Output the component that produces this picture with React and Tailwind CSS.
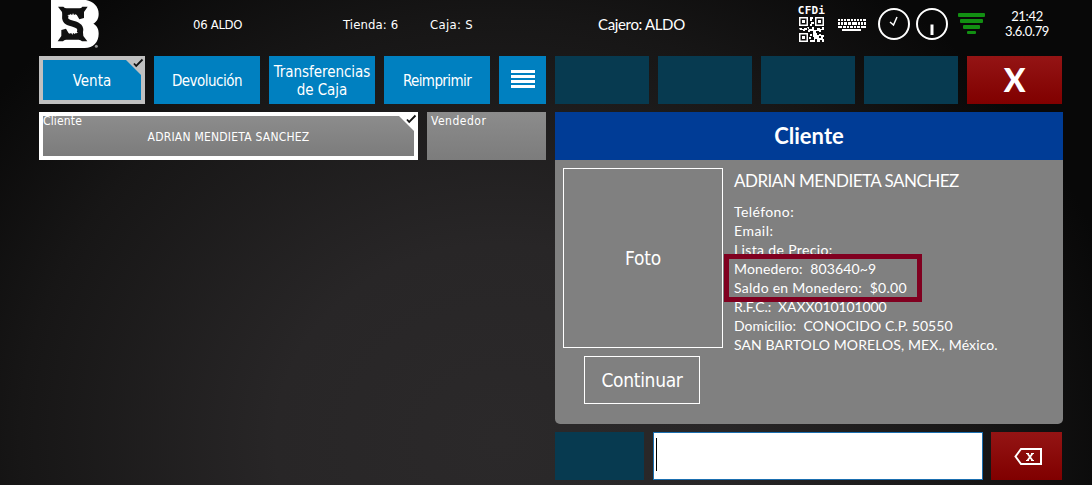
import React from 'react';

const topActions = [
  { label: 'Venta', tracking: 'tracking-[0px]' },
  { label: 'Devolución', tracking: 'tracking-[-0.5px]' },
  { label: 'Transferencias de Caja', tracking: 'tracking-[-0.05px]' },
  { label: 'Reimprimir', tracking: 'tracking-[-0.6px]' },
];

const customerLines = [
  { text: 'Teléfono:', tracking: 'tracking-[0.4px]' },
  { text: 'Email:', tracking: 'tracking-[0.5px]' },
  { text: 'Lista de Precio:', tracking: 'tracking-[0.35px]' },
  { text: 'Monedero:  803640~9', tracking: 'tracking-[0.15px]' },
  { text: 'Saldo en Monedero:  $0.00', tracking: 'tracking-[0.26px]' },
  { text: 'R.F.C.:  XAXX010101000', tracking: 'tracking-[-0.1px]' },
  { text: 'Domicilio:  CONOCIDO C.P. 50550', tracking: 'tracking-[0.06px]' },
  { text: 'SAN BARTOLO MORELOS, MEX., México.', tracking: 'tracking-[0.1px]' },
];

const LogoHorns = ({ transform }) => (
  <g transform={transform}>
    <path d="M54 20H70Q74 25 80 25H118Q124 25 127 20H143L132 36V54L118 58L110 44L86 44L68 58L66 36Z" fill="#111" />
    <path d="M87 52L92 41L96 48L99 39L103 48L107 42L111 54Z" fill="#fff" />
  </g>
);

const Logo = () => (
  <svg viewBox="33 0 150 150" className="w-[50px] h-[50px]">
    <path
      d="M33 0H138C160 4 176 20 176 41C176 56 170 65 160 71C171 77 176 86 176 101C176 126 160 144 134 144H33Z"
      fill="#fff"
    />
    <LogoHorns />
    <LogoHorns transform="rotate(180 98 72)" />
    <path d="M77 45C72 62 80 66 98 71C116 76 125 82 119 99" fill="none" stroke="#111" strokeWidth="18" />
    <circle cx="169" cy="139" r="4.5" fill="#999" />
  </svg>
);

const QrCode = () => (
  <svg viewBox="0 0 25 25" className="w-[25px] h-[25px]" fill="#fff">
    {/* finder squares */}
    {[[0, 0], [16, 0], [0, 16]].map(([x, y]) => (
      <g key={`${x}-${y}`}>
        <rect x={x + 0.75} y={y + 0.75} width="7.5" height="7.5" fill="none" stroke="#fff" strokeWidth="1.5" />
        <rect x={x + 3} y={y + 3} width="3" height="3" />
      </g>
    ))}
    <path d="M11 0h3v2h-1v2h-2zM12 5h3v2h-2v2h-2v-2h1zM0 11h3v1h2v-1h3v2h-2v1h-2v-1h-3zM8 10h2v2h3v-2h2v3h3v-2h3v1h2v-2h2v3h-3v2h-2v-1h-3v2h-3v-2h-3v1h-2v-2h1z" />
    <path d="M11 17h2v2h-2zM14 16h4v2h2v-1h2v2h-2v2h2v-3h3v2h-1v2h2v3h-3v-2h-2v2h-3v-3h-2v3h-3v-2h2v-3h-1zM10 20h2v2h-2zM11 23h2v2h-2z" />
  </svg>
);

const Keyboard = () => (
  <svg viewBox="0 0 28 12" className="w-[28px] h-[12px]" fill="#fff" shapeRendering="crispEdges">
    <path d="M0 0h2v2h-2zM3 0h2v2h-2zM6 0h2v2h-2zM9 0h3v2h-3zM13 0h2v2h-2zM16 0h2v2h-2zM19 0h2v2h-2zM22 0h2v2h-2zM25 0h3v2h-3z" />
    <path d="M0 3h2v3h-2zM3 3h2v3h-2zM6 3h3v3h-3zM10 3h3v3h-3zM14 3h5v3h-5zM20 3h2v3h-2zM23 3h2v3h-2zM26 3h2v3h-2z" />
    <path d="M0 7h4v2h-4zM5 7h3v2h-3zM9 7h2v2h-2zM12 7h3v2h-3zM16 7h2v2h-2zM19 7h3v2h-3zM23 7h5v2h-5z" />
    <path d="M4 10h19v2h-19z" />
  </svg>
);

const Clock = ({ children }) => (
  <svg viewBox="0 0 32 32" className="w-[32px] h-[32px]" fill="none" stroke="#fff">
    <circle cx="16" cy="16" r="15" strokeWidth="2" />
    {children}
  </svg>
);

const Signal = () => (
  <svg viewBox="0 0 27 22" className="w-[27px] h-[22px]" fill="#128f12">
    <rect x="0" y="0" width="27" height="4" rx="1" />
    <rect x="2" y="6" width="23" height="4" rx="1" />
    <rect x="5" y="12" width="17" height="4" rx="1" />
    <rect x="9" y="18" width="9" height="3" rx="1" />
  </svg>
);

const Corner = ({ color }) => (
  <svg viewBox="0 0 20 20" className="absolute -top-1 -right-1 w-[20px] h-[20px]">
    <path d="M0 3V0H20V20H17Z" fill={color} />
    <path d="M9 7.5L11.2 10L17.5 3.5" fill="none" stroke="#111" strokeWidth="1.8" />
  </svg>
);

const DarkTile = ({ className }) => <div className={`h-12 bg-[#073a50] ${className}`} />;

const Header = () => (
  <header className="flex h-14 text-[13px] leading-4 text-white font-['DejaVu_Sans_Condensed','DejaVu_Sans',sans-serif] whitespace-nowrap">
    <div className="ml-[51px] w-[50px]">
      <Logo />
    </div>
    <div className="ml-[92px] pt-[17px] w-[150px] tracking-[-0.3px]">06 ALDO</div>
    <div className="pt-[17px] w-[87px] tracking-[0.1px]">Tienda: 6</div>
    <div className="pt-[17px] w-[168px] tracking-[0.3px]">Caja: S</div>
    <div className="pt-[15px] w-[200px] text-[15px] leading-[18px] tracking-[-0.35px] font-[Lato,sans-serif]">Cajero: ALDO</div>
    <div className="w-[27px] flex flex-col items-center pt-[5px]">
      <span className="h-3 text-[11px] leading-3 font-bold tracking-[0.2px] font-['DejaVu_Sans_Mono',monospace]">CFDi</span>
      <QrCode />
    </div>
    <div className="ml-[13px] pt-[19px]">
      <Keyboard />
    </div>
    <div className="ml-[12px] pt-[8px] flex gap-[6px]">
      <Clock>
        <path d="M12 14L15.500 17L19 9" strokeWidth="1.500" />
      </Clock>
      <Clock>
        <path d="M16 16.500V27" strokeWidth="3" />
      </Clock>
    </div>
    <div className="ml-[10px] pt-[13px]">
      <Signal />
    </div>
    <div className="ml-[14px] pt-[9px] w-[56px] text-center text-[13px] leading-[15px] tracking-[-0.35px] font-[Lato,sans-serif]">
      <div>21:42</div>
      <div>3.6.0.79</div>
    </div>
  </header>
);

const LeftColumn = () => (
  <section className="w-[507px] flex flex-col gap-2 text-white font-['DejaVu_Sans_Condensed','DejaVu_Sans',sans-serif]">
    <div className="flex gap-[9px]">
      {topActions.map(({ label, tracking }, idx) => (
        <button
          key={label}
          className={`relative w-[106px] h-12 pt-[2px] bg-[#0080c0] text-[15px] leading-[18px] ${tracking} ${
            idx === 0 ? 'border-4 border-[#c0c0c0]' : ''
          }`}
        >
          {label}
          {idx === 0 && <Corner color="#c0c0c0" />}
        </button>
      ))}
      <button className="w-[47px] h-12 bg-[#0080c0] flex flex-col items-center justify-center gap-[2px] pb-[2px]">
        {[0, 1, 2, 3].map((bar) => (
          <span key={bar} className="w-6 h-[3px] bg-white" />
        ))}
      </button>
    </div>

    <div className="flex gap-[9px] text-[12px] leading-[14px]">
      <div className="relative w-[379px] h-12 border-4 border-white bg-linear-to-b from-[#8c8c8c] to-[#7c7c7c]">
        <div className="-mt-[2px] tracking-[0.15px]">Cliente</div>
        <div className="mt-[2px] text-center tracking-[0.23px]">ADRIAN MENDIETA SANCHEZ</div>
        <Corner color="#fff" />
      </div>
      <div className="w-[119px] h-12 pl-1 pt-[2px] tracking-[0.5px] bg-linear-to-b from-[#8c8c8c] to-[#7c7c7c]">Vendedor</div>
    </div>
  </section>
);

const CustomerPanel = () => (
  <div className="w-[508px] h-[312px] rounded-b-[5px] overflow-hidden bg-[#808080] text-white font-[Lato,sans-serif]">
    <h2 className="h-12 bg-[#003c96] text-center text-[22px] leading-[48px] font-bold">Cliente</h2>
    <div className="flex">
      <div className="ml-2 mt-2 w-[160px] flex flex-col items-center gap-2 font-['DejaVu_Sans_Condensed','DejaVu_Sans',sans-serif] text-[19px]">
        <div className="w-[160px] h-[180px] border border-white flex items-center justify-center tracking-[-0.2px]">Foto</div>
        <button className="mr-[2px] w-[116px] h-12 border border-white tracking-[-0.3px]">Continuar</button>
      </div>
      <div className="relative ml-[11px] pt-[10px] whitespace-pre">
        <h3 className="text-[17px] leading-[22px] tracking-[-0.52px]">ADRIAN MENDIETA SANCHEZ</h3>
        <div className="mt-[10px] text-[14px] leading-[19px]">
          {customerLines.map(({ text, tracking }) => (
            <div key={text} className={tracking}>{text}</div>
          ))}
        </div>
        <div className="absolute -left-[10px] top-[94px] w-[198px] h-[48px] border-[5px] border-[#800020]" />
      </div>
    </div>
  </div>
);

const RightColumn = () => (
  <section className="w-[508px] flex flex-col gap-2">
    <div className="flex gap-[9px]">
      <DarkTile className="w-[94px]" />
      <DarkTile className="w-[94px]" />
      <DarkTile className="w-[94px]" />
      <DarkTile className="w-[94px]" />
      <button className="w-[95px] h-12 bg-linear-to-b from-[#941414] to-[#800000] text-white text-[32px] leading-[46px] font-black font-[Lato,sans-serif]">
        X
      </button>
    </div>
    <CustomerPanel />
    <div className="flex">
      <DarkTile className="w-[89px]" />
      <div className="ml-[9px] w-[330px] h-12 bg-white border border-[#1b6fb0] pl-[2px] pt-[5px]">
        <div className="w-px h-[33px] bg-black" />
      </div>
      <button className="ml-2 w-[71px] h-12 bg-linear-to-b from-[#941414] to-[#800000] flex items-center justify-center">
        <svg viewBox="0 0 28 17" className="ml-[3px] w-[28px] h-[17px]" fill="none" stroke="#fff">
          <path d="M7 1H27V16H7L1.500 8.500Z" strokeWidth="2" />
          <path d="M13.500 5.500L18.500 12.500M18.500 5.500L13.500 12.500" strokeWidth="1.800" />
          <path d="M12 5.500h3M17 5.500h3M12 12.500h3M17 12.500h3" strokeWidth="1" />
        </svg>
      </button>
    </div>
  </section>
);

export default function App() {
  return (
    <div className="w-[1092px] h-[485px] overflow-hidden bg-[radial-gradient(ellipse_640px_560px_at_500px_440px,#2b292a_0%,#282627_35%,#171616_75%,#080808_100%)]">
      <Header />
      <main className="flex gap-[9px] pl-[39px]">
        <LeftColumn />
        <RightColumn />
      </main>
    </div>
  );
}
